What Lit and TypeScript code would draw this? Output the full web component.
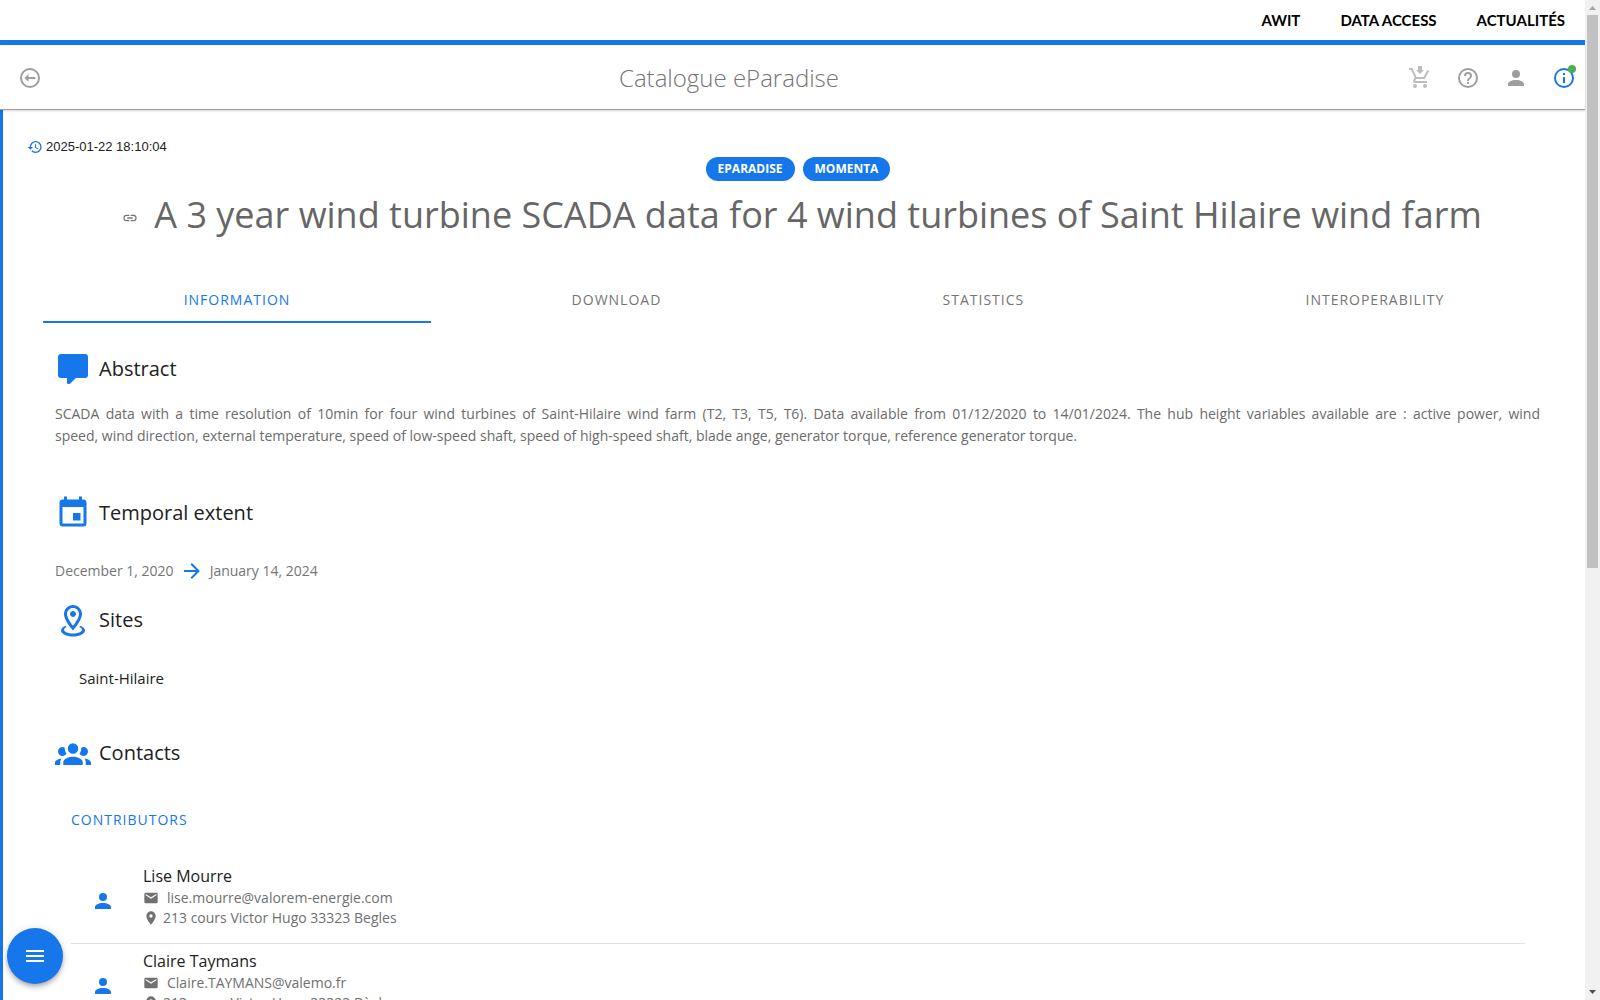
import { LitElement, html, css, svg } from "lit";
import { customElement, property, state } from "lit/decorators.js";
import { classMap } from "lit/directives/class-map.js";

const ICONS: Record<string, string> = {
  back: "M12,2A10,10 0 0,1 22,12A10,10 0 0,1 12,22A10,10 0 0,1 2,12A10,10 0 0,1 12,2M12,4A8,8 0 0,0 4,12A8,8 0 0,0 12,20A8,8 0 0,0 20,12A8,8 0 0,0 12,4M6.5,12L10.5,8V11H17.5V13H10.5V16Z",
  cart: "M10 0V4H8L12 8L16 4H14V0M1 2V4H3L6.6 11.59L5.25 14.04C5.09 14.32 5 14.65 5 15C5 16.11 5.9 17 7 17H19V15H7.42C7.29 15 7.17 14.89 7.17 14.75L7.2 14.63L8.1 13H15.55C16.3 13 16.97 12.59 17.31 11.97L21.16 4.96L19.42 4H19.41L18.31 6L15.55 11H8.53L8.4 10.73L6.16 6L5.21 4L4.27 2M7 18C5.9 18 5 18.9 5 20S5.9 22 7 22 9 21.11 9 20 8.1 18 7 18M17 18C15.9 18 15 18.9 15 20S15.9 22 17 22 19 21.11 19 20 18.1 18 17 18Z",
  help: "M11,18H13V16H11V18M12,2A10,10 0 0,0 2,12A10,10 0 0,0 12,22A10,10 0 0,0 22,12A10,10 0 0,0 12,2M12,20C7.59,20 4,16.41 4,12C4,7.59 7.59,4 12,4C16.41,4 20,7.59 20,12C20,16.41 16.41,20 12,20M12,6A4,4 0 0,0 8,10H10A2,2 0 0,1 12,8A2,2 0 0,1 14,10C14,12 11,11.75 11,15H13C13,12.75 16,12.5 16,10A4,4 0 0,0 12,6Z",
  account: "M12,4A4,4 0 0,1 16,8A4,4 0 0,1 12,12A4,4 0 0,1 8,8A4,4 0 0,1 12,4M12,14C16.42,14 20,15.79 20,18V20H4V18C4,15.79 7.58,14 12,14Z",
  info: "M11,9H13V7H11M12,20C7.59,20 4,16.41 4,12C4,7.59 7.59,4 12,4C16.41,4 20,7.59 20,12C20,16.41 16.41,20 12,20M12,2A10,10 0 0,0 2,12A10,10 0 0,0 12,22A10,10 0 0,0 22,12A10,10 0 0,0 12,2M11,17H13V11H11V17Z",
  history: "M13.5,8H12V13L16.28,15.54L17,14.33L13.5,12.25V8M13,3A9,9 0 0,0 4,12H1L4.96,16.03L9,12H6A7,7 0 0,1 13,5A7,7 0 0,1 20,12A7,7 0 0,1 13,19C11.07,19 9.32,18.21 8.06,16.94L6.64,18.36C8.27,20 10.5,21 13,21A9,9 0 0,0 22,12A9,9 0 0,0 13,3",
  link: "M3.9,12C3.9,10.29 5.29,8.9 7,8.9H11V7H7A5,5 0 0,0 2,12A5,5 0 0,0 7,17H11V15.1H7C5.29,15.1 3.9,13.71 3.9,12M8,13H16V11H8V13M17,7H13V8.9H17C18.71,8.9 20.1,10.29 20.1,12C20.1,13.71 18.71,15.1 17,15.1H13V17H17A5,5 0 0,0 22,12A5,5 0 0,0 17,7Z",
  comment: "M9,22A1,1 0 0,1 8,21V18H4A2,2 0 0,1 2,16V4C2,2.89 2.9,2 4,2H20A2,2 0 0,1 22,4V16A2,2 0 0,1 20,18H13.9L10.2,21.71C10,21.9 9.75,22 9.5,22H9Z",
  calendar: "M19,19H5V8H19M16,1V3H8V1H6V3H5C3.89,3 3,3.89 3,5V19A2,2 0 0,0 5,21H19A2,2 0 0,0 21,19V5C21,3.89 20.1,3 19,3H18V1M17,12H12V17H17V12Z",
  arrow: "M4,11V13H16L10.5,18.5L11.92,19.92L19.84,12L11.92,4.08L10.5,5.5L16,11H4Z",
  sites: "M12 4C14.2 4 16 5.8 16 8C16 10.1 13.9 13.5 12 15.9C10.1 13.4 8 10.1 8 8C8 5.8 9.8 4 12 4M12 2C8.7 2 6 4.7 6 8C6 12.5 12 19 12 19S18 12.4 18 8C18 4.7 15.3 2 12 2M12 6C10.9 6 10 6.9 10 8S10.9 10 12 10 14 9.1 14 8 13.1 6 12 6M20 19C20 21.2 16.4 23 12 23S4 21.2 4 19C4 17.7 5.2 16.6 7.1 15.8L7.7 16.7C6.7 17.2 6 17.8 6 18.5C6 19.9 8.7 21 12 21S18 19.9 18 18.5C18 17.8 17.3 17.2 16.2 16.7L16.8 15.8C18.8 16.6 20 17.7 20 19Z",
  group: "M12,5.5A3.5,3.5 0 0,1 15.5,9A3.5,3.5 0 0,1 12,12.5A3.5,3.5 0 0,1 8.5,9A3.5,3.5 0 0,1 12,5.5M5,8C5.56,8 6.08,8.15 6.53,8.42C6.38,9.85 6.8,11.27 7.66,12.38C7.16,13.34 6.16,14 5,14A3,3 0 0,1 2,11A3,3 0 0,1 5,8M19,8A3,3 0 0,1 22,11A3,3 0 0,1 19,14C17.84,14 16.84,13.34 16.34,12.38C17.2,11.27 17.62,9.85 17.47,8.42C17.92,8.15 18.44,8 19,8M5.5,18.25C5.5,16.18 8.41,14.5 12,14.5C15.59,14.5 18.5,16.18 18.5,18.25V20H5.5V18.25M0,20V18.5C0,17.11 1.89,15.94 4.45,15.6C3.86,16.28 3.5,17.22 3.5,18.25V20H0M24,20H20.5V18.25C20.5,17.22 20.14,16.28 19.55,15.6C22.11,15.94 24,17.11 24,18.5V20Z",
  mail: "M20,8L12,13L4,8V6L12,11L20,6M20,4H4C2.89,4 2,4.89 2,6V18A2,2 0 0,0 4,20H20A2,2 0 0,0 22,18V6C22,4.89 21.1,4 20,4Z",
  pin: "M12,11.5A2.5,2.5 0 0,1 9.5,9A2.5,2.5 0 0,1 12,6.5A2.5,2.5 0 0,1 14.5,9A2.5,2.5 0 0,1 12,11.5M12,2A7,7 0 0,0 5,9C5,14.25 12,22 12,22C12,22 19,14.25 19,9A7,7 0 0,0 12,2Z",
  menu: "M3,6H21V8H3V6M3,11H21V13H3V11M3,16H21V18H3V16Z",
};

@customElement("mdi-icon")
class MdiIcon extends LitElement {
  @property() name = "";
  @property({ type: Number }) size = 24;

  static styles = css`
    :host {
      display: inline-flex;
      flex: none;
    }
    .glyph {
      display: block;
      fill: currentColor;
    }
  `;

  render() {
    return html`<svg class="glyph" width=${this.size} height=${this.size} viewBox="0 0 24 24" aria-hidden="true">
      ${svg`<path d=${ICONS[this.name] ?? ""}></path>`}
    </svg>`;
  }
}

interface Contact {
  name: string;
  email: string;
  address: string;
}

@customElement("contact-item")
class ContactItem extends LitElement {
  @property({ attribute: false }) contact!: Contact;

  static styles = css`
    :host {
      display: flex;
      align-items: center;
      gap: 28px;
      padding: 5px 20px 14px;
      border-bottom: 1px solid #e0e0e0;
    }
    .avatar {
      color: #1677eb;
      padding-top: 9px;
    }
    .name {
      font-size: 16px;
      line-height: 24px;
      color: #212121;
    }
    .line {
      display: flex;
      align-items: center;
      font-size: 14px;
      line-height: 20px;
      color: #707070;
    }
    .email {
      gap: 8px;
      color: inherit;
      text-decoration: none;
      display: flex;
      align-items: center;
    }
    .address {
      gap: 4px;
    }
    .text {
      padding-bottom: 1px;
    }
  `;

  render() {
    const c = this.contact;
    return html`
      <mdi-icon class="avatar" name="account"></mdi-icon>
      <div class="text">
        <div class="name">${c.name}</div>
        <div class="line">
          <a class="email" href="mailto:${c.email}"><mdi-icon name="mail" size="16"></mdi-icon>${c.email}</a>
        </div>
        <div class="line address"><mdi-icon name="pin" size="16"></mdi-icon>${c.address}</div>
      </div>
    `;
  }
}

@customElement("app-root")
class AppRoot extends LitElement {
  @state() private activeTab = "Information";

  private readonly tabs = ["Information", "Download", "Statistics", "Interoperability"];
  private readonly contacts: Contact[] = [
    { name: "Lise Mourre", email: "lise.mourre@valorem-energie.com", address: "213 cours Victor Hugo 33323 Begles" },
    { name: "Claire Taymans", email: "Claire.TAYMANS@valemo.fr", address: "213 cours Victor Hugo 33323 Bègles" },
  ];

  static styles = css`
    :host {
      display: flex;
      height: 100vh;
      overflow: hidden;
      background: #fff;
      color: #212121;
      font-family: "Open Sans", sans-serif;
      font-size: 14px;
      line-height: 20px;
    }
    button {
      font: inherit;
      color: inherit;
      background: none;
      border: 0;
      padding: 0;
      cursor: pointer;
    }
    .page {
      flex: 1;
      min-width: 0;
      display: flex;
      flex-direction: column;
    }
    .sitebar {
      flex: none;
      display: flex;
      justify-content: flex-end;
      align-items: center;
      gap: 40px;
      height: 40px;
      padding: 0 20px;
      border-bottom: 5px solid #1677eb;
      font-family: Lato, sans-serif;
      font-size: 15px;
      font-weight: 700;
    }
    .sitelink {
      color: #000;
      text-decoration: none;
      text-transform: uppercase;
    }
    .toolbar {
      flex: none;
      display: flex;
      align-items: center;
      gap: 8px;
      height: 62px;
      padding: 2px 1px 0 10px;
      border-bottom: 1px solid #9e9e9e;
      box-shadow: 0 1px 2px rgba(0, 0, 0, 0.16);
      color: #9e9e9e;
      z-index: 1;
    }
    .brand {
      flex: 1;
      padding-left: 8px;
      text-align: center;
      font-size: 24px;
      line-height: 32px;
      font-weight: 300;
      color: #757575;
    }
    .tool {
      position: relative;
      display: flex;
      align-items: center;
      justify-content: center;
      width: 40px;
      height: 40px;
    }
    .tool:disabled {
      color: #bdbdbd;
    }
    .tool.active {
      color: #1677eb;
    }
    .dot {
      position: absolute;
      top: 7px;
      right: 8px;
      width: 8px;
      height: 8px;
      border-radius: 50%;
      background: #4caf50;
    }
    .body {
      flex: 1;
      min-height: 0;
      overflow: hidden;
      border-left: 3px solid #1677eb;
      padding: 27px 0 0;
    }
    .updated {
      display: flex;
      align-items: center;
      gap: 3px;
      padding-left: 24px;
      font-family: "Liberation Sans", sans-serif;
      font-size: 13px;
    }
    .updated mdi-icon {
      color: #1677eb;
    }
    .chips {
      display: flex;
      justify-content: center;
      gap: 8px;
      padding-left: 8px;
    }
    .chip {
      padding: 0 12px;
      border-radius: 12px;
      background: #1677eb;
      color: #fff;
      font-size: 12px;
      line-height: 24px;
      font-weight: 700;
      text-transform: uppercase;
    }
    .title {
      display: flex;
      align-items: center;
      justify-content: center;
      gap: 16px;
      margin: 0;
      padding: 8px 0 34px 16px;
      font-size: 36px;
      line-height: 52px;
      font-weight: 400;
      color: #666;
    }
    .permalink {
      display: flex;
      padding-top: 6px;
      color: #757575;
    }
    .tabs {
      display: flex;
      padding-left: 40px;
    }
    .tab {
      flex: 1 1 auto;
      height: 48px;
      padding: 4px 16px 0;
      border-bottom: 2px solid transparent;
      color: #757575;
      font-weight: 500;
      letter-spacing: 1px;
      text-transform: uppercase;
    }
    .tab.selected {
      color: #1677eb;
      border-color: #1677eb;
    }
    .panel {
      padding: 28px 45px 0 52px;
    }
    .heading {
      display: flex;
      align-items: center;
      gap: 8px;
      height: 36px;
      margin: 0;
      font-size: 20px;
      font-weight: 500;
      color: #212121;
    }
    .heading mdi-icon {
      color: #1677eb;
    }
    .abstract {
      margin: 16px 0 48px;
      line-height: 22px;
      color: #6b6b6b;
      text-align: justify;
    }
    .extent {
      display: flex;
      align-items: center;
      gap: 6px;
      margin: 28px 0 19px;
      color: #757575;
    }
    .extent mdi-icon {
      color: #1677eb;
    }
    .site {
      margin: 28px 0 45px;
      padding-left: 24px;
      font-size: 15px;
      line-height: 24px;
    }
    .contacts {
      padding: 39px 15px 0 16px;
    }
    .role {
      margin: 0 0 29px;
      font-size: 14px;
      font-weight: 500;
      letter-spacing: 1px;
      text-transform: uppercase;
      color: #1677eb;
    }
    .fab {
      position: fixed;
      left: 7px;
      bottom: 16px;
      display: flex;
      align-items: center;
      justify-content: center;
      width: 56px;
      height: 56px;
      border-radius: 50%;
      background: #1677eb;
      color: #fff;
      box-shadow: 0 2px 4px -1px rgba(0, 0, 0, 0.2), 0 4px 5px rgba(0, 0, 0, 0.14), 0 1px 10px rgba(0, 0, 0, 0.12);
    }
    .scrollbar {
      flex: none;
      display: flex;
      flex-direction: column;
      align-items: center;
      width: 15px;
      background: #f1f1f1;
    }
    .step {
      display: block;
      width: 15px;
      height: 15px;
    }
    .track {
      flex: 1;
      width: 11px;
    }
    .thumb {
      height: 57%;
      background: #c1c1c1;
    }
  `;

  render() {
    return html`
      <div class="page">
        <nav class="sitebar" aria-label="Site">
          <a class="sitelink" href="#awit">AWIT</a>
          <a class="sitelink" href="#data-access">Data access</a>
          <a class="sitelink" href="#actualites">Actualités</a>
        </nav>
        <header class="toolbar">
          <button class="tool" aria-label="Back"><mdi-icon name="back"></mdi-icon></button>
          <div class="brand">Catalogue eParadise</div>
          <button class="tool" aria-label="Cart" disabled><mdi-icon name="cart"></mdi-icon></button>
          <button class="tool" aria-label="Help"><mdi-icon name="help"></mdi-icon></button>
          <button class="tool" aria-label="Account"><mdi-icon name="account"></mdi-icon></button>
          <button class="tool active" aria-label="Information">
            <mdi-icon name="info"></mdi-icon><span class="dot"></span>
          </button>
        </header>
        <main class="body">
          <div class="updated"><mdi-icon name="history" size="16"></mdi-icon><time>2025-01-22 18:10:04</time></div>
          <div class="chips">
            <span class="chip">eParadise</span>
            <span class="chip">Momenta</span>
          </div>
          <h1 class="title">
            <a class="permalink" href="#permalink" aria-label="Permalink"><mdi-icon name="link" size="16"></mdi-icon></a>
            <span>A 3 year wind turbine SCADA data for 4 wind turbines of Saint Hilaire wind farm</span>
          </h1>
          <div class="tabs" role="tablist">
            ${this.tabs.map(
              (tab) => html`<button
                role="tab"
                class=${classMap({ tab: true, selected: tab === this.activeTab })}
                aria-selected=${tab === this.activeTab}
                @click=${() => (this.activeTab = tab)}
              >${tab}</button>`
            )}
          </div>
          <div class="panel" role="tabpanel">
            <h2 class="heading"><mdi-icon name="comment" size="36"></mdi-icon>Abstract</h2>
            <p class="abstract">
              SCADA data with a time resolution of 10min for four wind turbines of Saint-Hilaire wind farm (T2, T3, T5,
              T6). Data available from 01/12/2020 to 14/01/2024. The hub height variables available are : active power,
              wind speed,&nbsp;wind&nbsp;direction, external temperature, speed of low-speed shaft, speed of high-speed
              shaft, blade ange, generator torque, reference generator torque.
            </p>
            <h2 class="heading"><mdi-icon name="calendar" size="36"></mdi-icon>Temporal extent</h2>
            <div class="extent">
              <time>December 1, 2020</time><mdi-icon name="arrow"></mdi-icon><time>January 14, 2024</time>
            </div>
            <h2 class="heading"><mdi-icon name="sites" size="36"></mdi-icon>Sites</h2>
            <div class="site">Saint-Hilaire</div>
            <h2 class="heading"><mdi-icon name="group" size="36"></mdi-icon>Contacts</h2>
            <div class="contacts">
              <h3 class="role">Contributors</h3>
              ${this.contacts.map((c) => html`<contact-item .contact=${c}></contact-item>`)}
            </div>
          </div>
        </main>
      </div>
      <div class="scrollbar" aria-hidden="true">
        <svg class="step" viewBox="0 0 15 15"><path d="M4 10H11L7.5 6Z" fill="#a3a3a3"></path></svg>
        <div class="track"><div class="thumb"></div></div>
        <svg class="step" viewBox="0 0 15 15"><path d="M4 5H11L7.5 9Z" fill="#505050"></path></svg>
      </div>
      <button class="fab" aria-label="Menu"><mdi-icon name="menu"></mdi-icon></button>
    `;
  }
}
